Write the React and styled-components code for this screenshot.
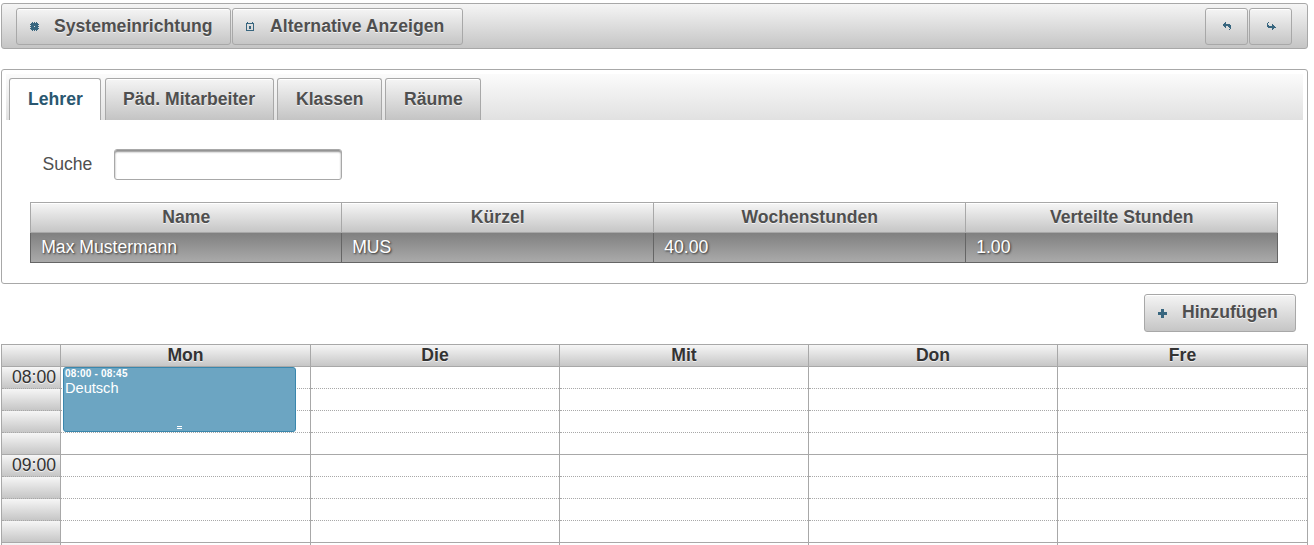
import React from 'react';
import styled, { createGlobalStyle, css } from 'styled-components';

const GlobalStyle = createGlobalStyle`
  *, *::before, *::after { box-sizing: border-box; }
  body {
    margin: 0;
    height: 545px;
    overflow: hidden;
    background: #fff;
    color: #4f4f4f;
    font: 17.6px/22px "Liberation Sans", Arial, sans-serif;
  }
`;

const raised = css`
  background: linear-gradient(to bottom, #f6f6f6, #c4c4c4) border-box;
  border: 1px solid #a8a8a8;
  text-shadow: 0 1px 0 rgba(255, 255, 255, 0.7);
`;

const Page = styled.main`
  width: 1307px;
  height: 545px;
  margin-left: 1px;
  padding-top: 3px;
  display: flex;
  flex-direction: column;
  overflow: hidden;
`;

const Toolbar = styled.header`
  ${raised}
  flex: none;
  height: 46px;
  border-radius: 3px;
  padding: 4px 15px 0 14px;
  display: flex;
  justify-content: space-between;
`;

const ToolGroup = styled.div`
  display: flex;
  gap: 1px;
`;

const Button = styled.button`
  ${raised}
  width: ${(p) => p.$width}px;
  height: ${(p) => p.$height || 37}px;
  padding: 0 0 ${(p) => (p.$height ? 2 : 1)}px ${(p) => p.$inset || 12}px;
  border-radius: 3px;
  box-shadow: inset 0 1px 0 #fff;
  color: #4f4f4f;
  font: bold 17.6px/22px "Liberation Sans", Arial, sans-serif;
  white-space: nowrap;
  display: flex;
  align-items: center;
`;

const ButtonLabel = styled.span`
  margin-left: 13px;
  letter-spacing: ${(p) => p.$tracking || 0}px;
`;

const Icon = styled.svg`
  flex: none;
  width: 12px;
  height: 12px;
  margin-top: 2px;
  fill: #38667f;
`;

const Panel = styled.section`
  flex: none;
  height: 215px;
  margin-top: 20px;
  padding: 4px;
  border: 1px solid #a8a8a8;
  border-radius: 3px;
`;

const TabBar = styled.nav`
  height: 46px;
  padding: 4px 3px 0;
  display: flex;
  background: linear-gradient(to bottom, #fbfbfb, #e1e1e1);
`;

const Tab = styled.div`
  ${raised}
  width: ${(p) => p.$width}px;
  height: 42px;
  margin-right: ${(p) => p.$after || 3}px;
  padding: 9px 0 0 ${(p) => p.$inset || 18}px;
  border-bottom: 0;
  border-radius: 3px 3px 0 0;
  font-weight: bold;
  box-shadow: inset 0 1px 0 #fff;
  ${(p) => p.$active && 'background: #fff; color: #2a5770;'}
`;

const TabBody = styled.div`
  padding: 29px 24px 0;
`;

const SearchRow = styled.label`
  height: 31px;
  padding-left: 12.5px;
  display: flex;
  align-items: center;
`;

const SearchText = styled.span`
  width: 71.5px;
  padding-bottom: 2px;
`;

const SearchInput = styled.input`
  width: 228px;
  height: 31px;
  border: 1px solid #a8a8a8;
  border-radius: 3px;
  background: #fff;
  box-shadow: inset 0 2px 2px #8f8f8f;
`;

const Table = styled.div`
  width: 1248px;
  margin-top: 22px;
  border: 1px solid #a8a8a8;
`;

const TableHead = styled.div`
  ${raised}
  border-width: 0 0 1px;
  height: 30px;
  display: grid;
  grid-template-columns: 311px 312px 312px 311px;
  box-shadow: inset 0 1px 0 #fff;
`;

const HeadCell = styled.div`
  padding: 3px 0 0 0.5px;
  font-weight: bold;
  text-align: center;
  border-right: 1px solid #a8a8a8;
  &:last-child { border-right: 0; }
`;

const TableRow = styled.div`
  margin: 0 -1px -1px;
  height: 30px;
  display: grid;
  grid-template-columns: 311px 312px 312px 311px;
  border: 1px solid #656565;
  border-top: 0;
  background: linear-gradient(to bottom, #808080, #aaa);
  color: #fff;
  text-shadow: 1px 1px 2px #303030;
`;

const Cell = styled.div`
  padding: 3px 10px 0 10.2px;
  border-right: 1px solid #656565;
  &:last-child { border-right: 0; }
`;

const Actions = styled.div`
  flex: none;
  height: 60px;
  padding: 10px 12px 0 0;
  display: flex;
  justify-content: flex-end;
`;

const Calendar = styled.section`
  flex: none;
  border: 1px solid #a8a8a8;
  border-bottom: 0;
  display: grid;
  grid-template-columns: 59px 250px 249px 249px 249px 249px;
`;

const Day = styled.div`
  ${raised}
  border-width: 0 1px 1px 0;
  height: 22px;
  line-height: 20px;
  text-align: center;
  font-weight: bold;
  color: #333;
  &:nth-child(6) { border-right: 0; }
`;

const TimeColumn = styled.div`
  border-right: 1px solid #a8a8a8;
`;

const TimeSlot = styled.div`
  ${raised}
  height: 22px;
  padding-right: 4px;
  border-width: 0 0 1px;
  border-bottom-style: ${(p) => (p.$hourEnd ? 'solid' : 'dotted')};
  line-height: 21px;
  text-align: right;
  color: #333;
`;

const DayColumn = styled.div`
  position: relative;
  border-right: 1px solid #a8a8a8;
  &:last-child { border-right: 0; }
`;

const Slot = styled.div`
  height: 22px;
  border-bottom: 1px ${(p) => (p.$hourEnd ? 'solid' : 'dotted')} #a8a8a8;
`;

const Lesson = styled.article`
  position: absolute;
  left: 2px;
  top: 0;
  width: 233px;
  height: 65px;
  padding: 0 1px;
  border: 1px solid #3a87ad;
  border-radius: 3px;
  background: #6ca5c2;
  color: #fff;
`;

const LessonTime = styled.div`
  font: bold 10px/11px "Liberation Sans", Arial, sans-serif;
  letter-spacing: 0.2px;
`;

const LessonTitle = styled.div`
  margin-top: 1px;
  font-size: 14.6px;
  line-height: 17px;
`;

const ResizeGrip = styled.span`
  position: absolute;
  left: 113px;
  bottom: 2px;
  width: 5px;
  height: 3px;
  border: solid #fff;
  border-width: 1px 0;
`;

const icons = {
  gear: [
    '............',
    '...#.#.#....',
    '..#######...',
    '.#########..',
    '..#######...',
    '.####.####..',
    '..#######...',
    '.#########..',
    '..#######...',
    '...#.#.#....',
  ],
  calendar: [
    '............',
    '..#....#....',
    '.########...',
    '.#......#...',
    '.#......#...',
    '.#..##..#...',
    '.#..##..#...',
    '.#..##..#...',
    '.#......#...',
    '.########...',
  ],
  undo: [
    '............',
    '...#........',
    '..##........',
    '.#######....',
    '.########...',
    '..##..###...',
    '...#...##...',
    '........#...',
    '.......#....',
  ],
  redo: [
    '............',
    '..#.........',
    '.#..........',
    '.#....#.....',
    '.##...##....',
    '.########...',
    '..########..',
    '......##....',
    '......#.....',
  ],
  plus: [
    '............',
    '............',
    '....###.....',
    '....###.....',
    '....###.....',
    '.#########..',
    '.#########..',
    '.#########..',
    '....###.....',
    '....###.....',
    '....###.....',
  ],
};

const PixelIcon = ({ name }) => (
  <Icon viewBox="0 0 12 12" shapeRendering="crispEdges" aria-hidden="true">
    <path
      d={icons[name]
        .flatMap((row, y) => [...row].map((c, x) => (c === '#' ? `M${x} ${y}h1v1h-1z` : '')))
        .join('')}
    />
  </Icon>
);

const days = ['Mon', 'Die', 'Mit', 'Don', 'Fre'];
const slots = ['08:00', '', '', '', '09:00', '', '', '', ''];

export default function App() {
  return (
    <>
      <GlobalStyle />
      <Page>
        <Toolbar>
          <ToolGroup>
            <Button $width={215}><PixelIcon name="gear" /><ButtonLabel>Systemeinrichtung</ButtonLabel></Button>
            <Button $width={231}><PixelIcon name="calendar" /><ButtonLabel $tracking={0.05}>Alternative Anzeigen</ButtonLabel></Button>
          </ToolGroup>
          <ToolGroup>
            <Button $width={43} $inset={16} aria-label="Rückgängig"><PixelIcon name="undo" /></Button>
            <Button $width={43} $inset={16} aria-label="Wiederholen"><PixelIcon name="redo" /></Button>
          </ToolGroup>
        </Toolbar>
        <Panel>
          <TabBar>
            <Tab $active $width={92} $after={4}>Lehrer</Tab>
            <Tab $width={169} $inset={17}>Päd. Mitarbeiter</Tab>
            <Tab $width={105}>Klassen</Tab>
            <Tab $width={96}>Räume</Tab>
          </TabBar>
          <TabBody>
            <SearchRow><SearchText>Suche</SearchText><SearchInput /></SearchRow>
            <Table>
              <TableHead>
                {['Name', 'Kürzel', 'Wochenstunden', 'Verteilte Stunden'].map((t) => <HeadCell key={t}>{t}</HeadCell>)}
              </TableHead>
              <TableRow>
                {['Max Mustermann', 'MUS', '40.00', '1.00'].map((t) => <Cell key={t}>{t}</Cell>)}
              </TableRow>
            </Table>
          </TabBody>
        </Panel>
        <Actions>
          <Button $width={152} $height={38}><PixelIcon name="plus" /><ButtonLabel>Hinzufügen</ButtonLabel></Button>
        </Actions>
        <Calendar>
          <Day />
          {days.map((d) => <Day key={d}>{d}</Day>)}
          <TimeColumn>
            {slots.map((t, i) => <TimeSlot key={i} $hourEnd={i % 4 === 3}>{t}</TimeSlot>)}
          </TimeColumn>
          {days.map((d) => (
            <DayColumn key={d}>
              {slots.map((_, i) => <Slot key={i} $hourEnd={i % 4 === 3} />)}
              {d === 'Mon' && (
                <Lesson>
                  <LessonTime>08:00 - 08:45</LessonTime>
                  <LessonTitle>Deutsch</LessonTitle>
                  <ResizeGrip />
                </Lesson>
              )}
            </DayColumn>
          ))}
        </Calendar>
      </Page>
    </>
  );
}
